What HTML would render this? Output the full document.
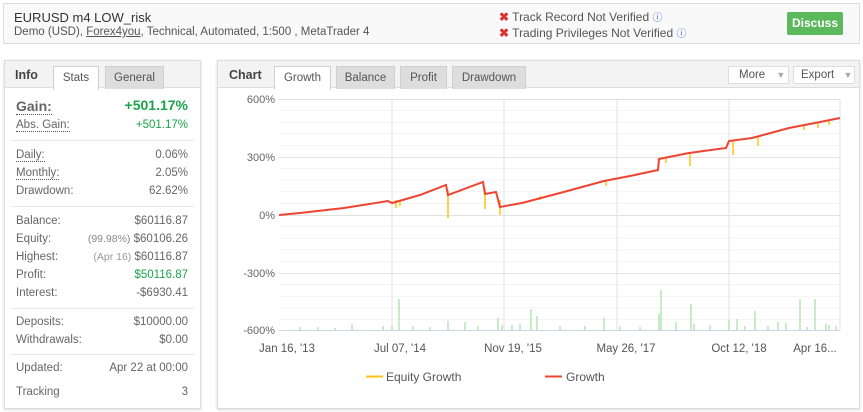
<!DOCTYPE html><html><head><style>
*{margin:0;padding:0;box-sizing:border-box}
body{width:863px;height:412px;background:#fff;font-family:"Liberation Sans",sans-serif;color:#666;position:relative;overflow:hidden;font-size:11.5px}
.a{position:absolute;white-space:nowrap}
.box{position:absolute;border:1px solid #ddd;background:#fff;box-shadow:0 1px 3px rgba(0,0,0,.15)}
.tab{position:absolute;top:5px;height:23px;line-height:23px;text-align:center;font-size:11.5px;color:#555;background:#ddd;border:1px solid #d0d0d0;border-bottom:none}
.tab.on{background:#fff;height:24px}
.l{left:11px}.r{right:12px;text-align:right}
.d{border-bottom:1px dotted #555}
.sep{position:absolute;left:6px;right:6px;height:1px;background:#e8e8e8}
.g{color:#1aa34a}
</style></head><body>
<div class="box" style="left:3px;top:3px;width:857px;height:41px;background:#f9f9f9;box-shadow:none">
<div class="a" style="left:10px;top:6px;font-size:13px;color:#333">EURUSD m4 LOW_risk</div>
<div class="a" style="left:10px;top:22px;font-size:11.5px;color:#555">Demo (USD), <u>Forex4you</u>, Technical, Automated, 1:500 , MetaTrader 4</div>
<div class="a" style="left:495px;top:5px;font-size:12px;color:#555"><span style="color:#d33;font-weight:bold">✖</span> Track Record Not Verified <span style="color:#36c;font-size:10px">ⓘ</span></div>
<div class="a" style="left:495px;top:21px;font-size:12px;color:#555"><span style="color:#d33;font-weight:bold">✖</span> Trading Privileges Not Verified <span style="color:#36c;font-size:10px">ⓘ</span></div>
<div class="a" style="left:783px;top:8px;width:56px;height:23px;background:#5cb85c;border-radius:2px;color:#fff;font-weight:bold;font-size:12px;line-height:23px;text-align:center">Discuss</div>
</div>

<div class="box" style="left:4px;top:60px;width:197px;height:349px">
<div style="position:absolute;left:0;top:0;right:0;height:27px;background:#f3f3f3;border-bottom:1px solid #ddd"></div>
<div class="a" style="left:10px;top:7px;font-weight:bold;color:#444;font-size:12.5px">Info</div>
<div class="tab on" style="left:48px;width:46px">Stats</div>
<div class="tab" style="left:100px;width:59px">General</div>
<div class="a l" style="top:37px;font-size:14px;font-weight:bold;color:#666"><span class="d">Gain:</span></div><div class="a r g" style="top:36px;font-size:14px;font-weight:bold">+501.17%</div>
<div class="a l" style="top:58px"><span class="d">Abs. Gain:</span></div><div class="a r g" style="top:58px">+501.17%</div>
<div class="sep" style="top:79px"></div>
<div class="a l" style="top:88px"><span class="d">Daily:</span></div><div class="a r" style="top:88px">0.06%</div>
<div class="a l" style="top:106px"><span class="d">Monthly:</span></div><div class="a r" style="top:106px">2.05%</div>
<div class="a l" style="top:124px">Drawdown:</div><div class="a r" style="top:124px">62.62%</div>
<div class="sep" style="top:145px"></div>
<div class="a l" style="top:154px">Balance:</div><div class="a r" style="top:154px">$60116.87</div>
<div class="a l" style="top:172px">Equity:</div><div class="a r" style="top:172px"><span style="color:#888;font-size:10.5px">(99.98%)</span> $60106.26</div>
<div class="a l" style="top:190px">Highest:</div><div class="a r" style="top:190px"><span style="color:#999;font-size:10.5px">(Apr 16)</span> $60116.87</div>
<div class="a l" style="top:208px">Profit:</div><div class="a r g" style="top:208px">$50116.87</div>
<div class="a l" style="top:226px">Interest:</div><div class="a r" style="top:226px">-$6930.41</div>
<div class="sep" style="top:247px"></div>
<div class="a l" style="top:255px">Deposits:</div><div class="a r" style="top:255px">$10000.00</div>
<div class="a l" style="top:273px">Withdrawals:</div><div class="a r" style="top:273px">$0.00</div>
<div class="sep" style="top:293px"></div>
<div class="a l" style="top:301px">Updated:</div><div class="a r" style="top:301px">Apr 22 at 00:00</div>
<div class="a l" style="top:325px">Tracking</div><div class="a r" style="top:325px">3</div>
</div>

<div class="box" style="left:217px;top:60px;width:643px;height:349px">
<div style="position:absolute;left:0;top:0;right:0;height:27px;background:#f3f3f3;border-bottom:1px solid #ddd"></div>
<div class="a" style="left:11px;top:7px;font-weight:bold;color:#444;font-size:12.5px">Chart</div>
<div class="tab on" style="left:56px;width:57px">Growth</div>
<div class="tab" style="left:118px;width:59px">Balance</div>
<div class="tab" style="left:182px;width:47px">Profit</div>
<div class="tab" style="left:234px;width:74px">Drawdown</div>
<div class="a" style="left:510px;top:5px;width:61px;height:18px;border:1px solid #ddd;background:#fff;font-size:11.5px;line-height:16px;padding-left:10px;color:#555">More <span style="color:#aaa;font-size:9px;margin-left:8px">▼</span></div>
<div class="a" style="left:575px;top:5px;width:62px;height:18px;border:1px solid #ddd;background:#fff;font-size:11.5px;line-height:16px;padding-left:7px;color:#555">Export <span style="color:#aaa;font-size:9px;margin-left:6px">▼</span></div>
</div>

<svg class="a" style="left:0;top:0" width="863" height="412">
<g stroke="#f2f2f2" stroke-width="1">
<line x1="279" x2="840" y1="110.6" y2="110.6"/><line x1="279" x2="840" y1="122.2" y2="122.2"/><line x1="279" x2="840" y1="133.8" y2="133.8"/><line x1="279" x2="840" y1="145.4" y2="145.4"/>
<line x1="279" x2="840" y1="168.6" y2="168.6"/><line x1="279" x2="840" y1="180.2" y2="180.2"/><line x1="279" x2="840" y1="191.8" y2="191.8"/><line x1="279" x2="840" y1="203.4" y2="203.4"/>
<line x1="279" x2="840" y1="226.6" y2="226.6"/><line x1="279" x2="840" y1="238.2" y2="238.2"/><line x1="279" x2="840" y1="249.8" y2="249.8"/><line x1="279" x2="840" y1="261.4" y2="261.4"/>
<line x1="279" x2="840" y1="284.6" y2="284.6"/><line x1="279" x2="840" y1="296.2" y2="296.2"/><line x1="279" x2="840" y1="307.8" y2="307.8"/><line x1="279" x2="840" y1="319.4" y2="319.4"/>
</g>
<g stroke="#e2e2e2" stroke-width="1">
<line x1="279" x2="840" y1="99.5" y2="99.5"/><line x1="279" x2="840" y1="157.5" y2="157.5"/><line x1="279" x2="840" y1="215.5" y2="215.5"/><line x1="279" x2="840" y1="273.5" y2="273.5"/>
<line x1="392" x2="392" y1="99" y2="330"/><line x1="504" x2="504" y1="99" y2="330"/><line x1="617" x2="617" y1="99" y2="330"/><line x1="729" x2="729" y1="99" y2="330"/><line x1="840" x2="840" y1="99" y2="330"/>
</g>
<g stroke="#8fd88f" stroke-width="1">
<line x1="352" x2="352" y1="330" y2="324"/><line x1="399" x2="399" y1="330" y2="299"/><line x1="448" x2="448" y1="330" y2="321"/><line x1="465" x2="465" y1="330" y2="322"/>
<line x1="498" x2="498" y1="330" y2="318"/><line x1="502" x2="502" y1="330" y2="325"/><line x1="531" x2="531" y1="330" y2="309"/><line x1="537" x2="537" y1="330" y2="316"/>
<line x1="604" x2="604" y1="330" y2="318"/><line x1="661" x2="661" y1="330" y2="290"/><line x1="659" x2="659" y1="330" y2="314"/><line x1="676" x2="676" y1="330" y2="322"/>
<line x1="691" x2="691" y1="330" y2="304"/><line x1="694" x2="694" y1="330" y2="324"/><line x1="729" x2="729" y1="330" y2="320"/><line x1="737" x2="737" y1="330" y2="319"/>
<line x1="755" x2="755" y1="330" y2="311"/><line x1="778" x2="778" y1="330" y2="322"/><line x1="800" x2="800" y1="330" y2="299"/><line x1="815" x2="815" y1="330" y2="299"/>
<line x1="826" x2="826" y1="330" y2="324"/><line x1="829" x2="829" y1="330" y2="325"/><line x1="300" x2="300" y1="330" y2="327"/><line x1="318" x2="318" y1="330" y2="327"/>
<line x1="335" x2="335" y1="330" y2="328"/><line x1="383" x2="383" y1="330" y2="326"/><line x1="392" x2="392" y1="330" y2="326"/><line x1="413" x2="413" y1="330" y2="326"/>
<line x1="430" x2="430" y1="330" y2="327"/><line x1="478" x2="478" y1="330" y2="326"/><line x1="512" x2="512" y1="330" y2="325"/><line x1="520" x2="520" y1="330" y2="324"/>
<line x1="560" x2="560" y1="330" y2="326"/><line x1="585" x2="585" y1="330" y2="326"/><line x1="620" x2="620" y1="330" y2="326"/><line x1="640" x2="640" y1="330" y2="327"/>
<line x1="710" x2="710" y1="330" y2="325"/><line x1="745" x2="745" y1="330" y2="326"/><line x1="768" x2="768" y1="330" y2="326"/><line x1="786" x2="786" y1="330" y2="323"/>
<line x1="807" x2="807" y1="330" y2="327"/><line x1="836" x2="836" y1="330" y2="326"/>
</g>
<line x1="279" x2="840" y1="330.5" y2="330.5" stroke="#ccd6eb"/>
<g stroke="#ffc20e" stroke-width="1.5">
<line x1="448" x2="448" y1="190" y2="218"/><line x1="485" x2="485" y1="188" y2="209"/><line x1="500" x2="500" y1="200" y2="215"/>
<line x1="396" x2="396" y1="200" y2="208"/><line x1="400" x2="400" y1="200" y2="206"/><line x1="606" x2="606" y1="180" y2="186"/>
<line x1="690" x2="690" y1="152" y2="166"/><line x1="733" x2="733" y1="140" y2="155"/><line x1="758" x2="758" y1="137" y2="146"/>
<line x1="804" x2="804" y1="125" y2="130"/><line x1="818" x2="818" y1="122" y2="128"/><line x1="829" x2="829" y1="120" y2="125"/>
<line x1="666" x2="666" y1="158" y2="163"/><line x1="540" x2="540" y1="196" y2="200"/>
</g>
<path d="M279 215 L300 213 L344 208 L388 201 L392 203 L420 195 L446 185 L448 195 L483 182 L485 194 L496 192 L500 207 L522 203 L560 193 L604 181 L630 176 L658 170 L659 159 L689 153 L726 148 L729 141 L752 138 L789 128 L815 123 L840 118" fill="none" stroke="#ee4433" stroke-width="2"/>
<g font-size="11" fill="#666" font-family="Liberation Sans,sans-serif" text-anchor="end">
<text x="275" y="103">600%</text><text x="275" y="161">300%</text><text x="275" y="219">0%</text><text x="275" y="277">-300%</text><text x="275" y="334">-600%</text>
</g>
<g font-size="11.5" fill="#555" font-family="Liberation Sans,sans-serif" text-anchor="middle">
<text x="287" y="352">Jan 16, '13</text><text x="400" y="352">Jul 07, '14</text><text x="513" y="352">Nov 19, '15</text><text x="626" y="352">May 26, '17</text><text x="739" y="352">Oct 12, '18</text><text x="815" y="352">Apr 16...</text>
</g>
<line x1="366" x2="383" y1="376.5" y2="376.5" stroke="#ffc20e" stroke-width="2"/>
<line x1="545" x2="562" y1="376.5" y2="376.5" stroke="#ee4433" stroke-width="2"/>
<g font-size="12" fill="#555" font-family="Liberation Sans,sans-serif">
<text x="386" y="381">Equity Growth</text><text x="566" y="381">Growth</text>
</g>
</svg>
</body></html>
